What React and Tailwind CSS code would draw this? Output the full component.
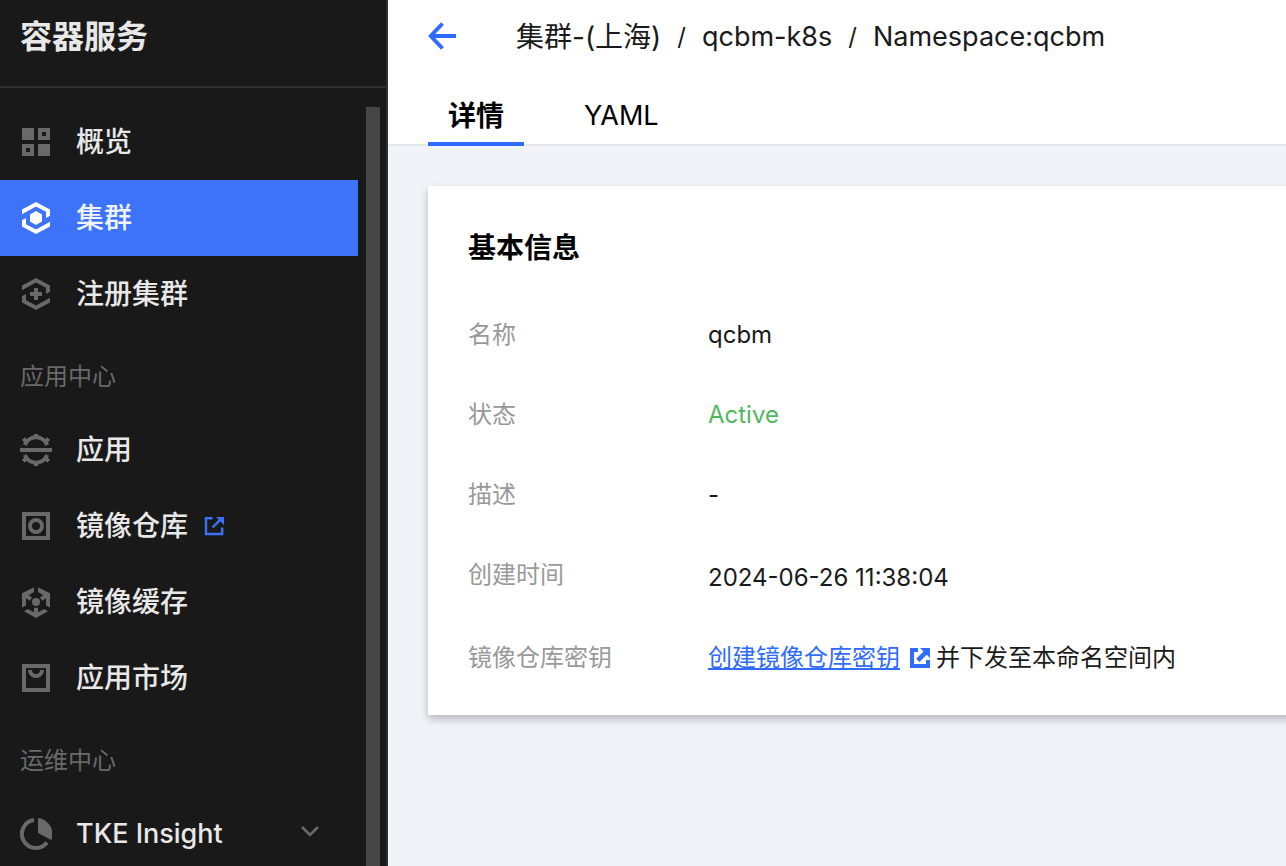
const HEX_TOP = 'M2 7.5 16 0l14 7.5v6.3L26 16V9.8L16 4.4 2 12.3z'
const HEX_BOTTOM = 'M30 24.5 16 32 2 24.5v-6.3L6 16v6.2l10 5.4 14-7.9z'

const icons = {
  overview: (
    <path
      fill="currentColor"
      fillRule="evenodd"
      d="M2 2h12v12H2zM18 2h12v12H18zM22 6v4h4V6zM2 18h12v12H2zM6 22v4h4v-4zM18 18h12v12H18z"
    />
  ),
  cluster: (
    <g fill="currentColor">
      <path d={HEX_TOP} />
      <path d={HEX_BOTTOM} />
      <path d="M10 12.5 16 9l6 3.5v7L16 23l-6-3.5z" />
    </g>
  ),
  register: (
    <g fill="currentColor">
      <path d={HEX_TOP} />
      <path d={HEX_BOTTOM} />
      <path d="M14 10h4v4h4v4h-4v4h-4v-4h-4v-4h4z" />
    </g>
  ),
  app: (
    <g fill="none" stroke="currentColor" strokeWidth="4">
      <path d="M0 16h32M16 0v4M16 28v4M3.3 4.6l4.4 4.4M28.7 4.6l-4.4 4.4M3.3 27.4l4.4-4.4M28.7 27.4l-4.4-4.4" />
      <path d="M4.8 11a12 12 0 0 1 22.4 0M4.8 21a12 12 0 0 0 22.4 0" />
    </g>
  ),
  registry: (
    <g fill="none" stroke="currentColor" strokeWidth="4">
      <rect x="4" y="4" width="24" height="24" />
      <circle cx="16" cy="16" r="6" />
    </g>
  ),
  cache: (
    <g fill="currentColor">
      <path d="M14 1.3 2 7.3v14.4l4-2.4v-7l4 2.4 2-3.4-3.4-2L14 6z" />
      <path d="M18 1.3l12 6v14.4l-4-2.4v-7l-4 2.4-2-3.4 3.4-2L18 6z" />
      <path d="M4 25.3 16 32l12-6.7-4-2.3-6 3.3v-4.6h-4v4.6L8 23z" />
      <circle cx="16" cy="16" r="4" />
    </g>
  ),
  market: (
    <g fill="none" stroke="currentColor" strokeWidth="4">
      <rect x="4" y="4" width="24" height="24" />
      <path d="M10 8a6 6 0 0 0 12 0" />
    </g>
  ),
  insight: (
    <g>
      <path fill="none" stroke="currentColor" strokeWidth="4" d="M14 2.1a14 14 0 1 0 13 22.4" />
      <path fill="currentColor" d="M18 0a16 16 0 0 1 13.2 22L18 15z" />
    </g>
  ),
}

function Icon({ name }) {
  return (
    <svg viewBox="0 0 32 32" className="size-8 shrink-0" aria-hidden="true">
      {icons[name]}
    </svg>
  )
}

function ExternalOutline() {
  return (
    <svg viewBox="0 0 20 20" className="size-5 text-[#3a72f5]" aria-hidden="true">
      <path fill="none" stroke="currentColor" strokeWidth="2.4" d="M8.5 2.2H2v15.8h16.2v-6.4M8.6 11.4l7.6-7.6" />
      <path fill="currentColor" d="M12 1h8v8z" />
    </svg>
  )
}

function ExternalSolid() {
  return (
    <svg viewBox="0 0 20 20" className="size-5 text-[#2f6bff]" aria-hidden="true">
      <path fill="none" stroke="currentColor" strokeWidth="4" d="M8 2H2v16h16v-6" />
      <path fill="none" stroke="currentColor" strokeWidth="4.6" d="M7.8 12.4l8-8" />
      <path fill="currentColor" d="M10 0h10v10z" />
    </svg>
  )
}

function NavItem({ icon, label, active, external, expandable }) {
  const tone = active ? 'bg-[#3d73f8] text-white' : 'text-[#696969]'
  return (
    <li>
      <a href="#" aria-current={active ? 'page' : undefined} className={`flex h-[76px] items-center pl-5 pr-[39px] ${tone}`}>
        <Icon name={icon} />
        <span
          className={`ml-6 font-medium leading-10 ${expandable ? 'text-[27px]' : 'text-[28px]'} ${active ? 'text-[#eef3ff]' : 'text-[#e8e8e8]'}`}
        >
          {label}
        </span>
        {external && (
          <span className="ml-4">
            <ExternalOutline />
          </span>
        )}
        {expandable && (
          <svg viewBox="0 0 18 12" className="mb-1 ml-auto h-3 w-[18px]" aria-hidden="true">
            <path fill="none" stroke="currentColor" strokeWidth="2.6" d="M1 1l8 8 8-8" />
          </svg>
        )}
      </a>
    </li>
  )
}

function NavSection({ children }) {
  return <li className="flex h-20 items-center pl-5 pt-2.5 text-2xl text-[#696969]">{children}</li>
}

function Sidebar() {
  return (
    <aside className="flex w-[388px] shrink-0 flex-col border-r-2 border-[#2e2e2e] bg-[#191919]">
      <header className="flex h-[88px] shrink-0 items-center border-b-2 border-[#2e2e2e] pb-3 pl-5">
        <h2 className="text-[32px] font-bold leading-10 text-[#e8e8e8]">容器服务</h2>
      </header>
      <div className="flex min-h-0 flex-1 gap-2 pr-1.5">
        <nav className="min-w-0 flex-1 overflow-hidden pt-4">
          <ul>
            <NavItem icon="overview" label="概览" />
            <NavItem icon="cluster" label="集群" active />
            <NavItem icon="register" label="注册集群" />
            <NavSection>应用中心</NavSection>
            <NavItem icon="app" label="应用" />
            <NavItem icon="registry" label="镜像仓库" external />
            <NavItem icon="cache" label="镜像缓存" />
            <NavItem icon="market" label="应用市场" />
            <NavSection>运维中心</NavSection>
            <NavItem icon="insight" label="TKE Insight" expandable />
          </ul>
        </nav>
        <div className="mt-[19px] w-3.5 bg-[#464646]" />
      </div>
    </aside>
  )
}

function Row({ label, tall, children }) {
  return (
    <div className={`flex ${tall ? 'h-[43px]' : 'h-10'}`}>
      <dt className="w-60 shrink-0 leading-10 text-[#999]">{label}</dt>
      <dd className={`flex h-10 items-center leading-10 ${tall ? 'self-end' : ''}`}>{children}</dd>
    </div>
  )
}

export default function App() {
  return (
    <div className="flex h-screen overflow-hidden bg-[#f2f3f8] font-['Inter','Noto_Sans_CJK_SC',sans-serif] text-[#1a1a1a]">
      <Sidebar />
      <main className="min-w-0 flex-1">
        <header className="flex h-[146px] flex-col justify-between border-b-2 border-[#e7e8ed] bg-white pl-10">
          <div className="flex h-[72px] items-center">
            <button type="button" aria-label="返回" className="mr-[60px]">
              <svg viewBox="0 0 28 28" className="size-7 text-[#2f6bff]" aria-hidden="true">
                <path fill="none" stroke="currentColor" strokeWidth="3.8" d="M14.5 1.6 2.7 14l11.8 12.4M3 14h25" />
              </svg>
            </button>
            <nav className="flex items-center gap-4 pt-0.5 text-[27px] leading-10">
              <a href="#" className="text-[28px]">集群-(上海)</a>
              <span className="text-2xl">/</span>
              <a href="#">qcbm-k8s</a>
              <span className="text-2xl">/</span>
              <span>Namespace:qcbm</span>
            </nav>
          </div>
          <div role="tablist" className="-mb-0.5 flex gap-10 text-[27px] leading-10 text-black">
            <button type="button" role="tab" aria-selected="true" className="h-[52px] border-b-4 border-[#2f6bff] px-5 pb-1 text-[28px] font-bold">
              详情
            </button>
            <button type="button" role="tab" aria-selected="false" className="h-[52px] border-b-4 border-transparent px-5 pb-1">
              YAML
            </button>
          </div>
        </header>
        <div className="pl-10 pt-10">
          <section className="-mr-4 bg-white pb-[37px] pl-10 pt-[42px] shadow-[0_4px_8px_rgba(54,58,80,0.32)]">
            <h3 className="mb-[47px] text-[28px] font-bold leading-10 text-black">基本信息</h3>
            <dl className="flex flex-col gap-10 text-2xl">
              <Row label="名称">qcbm</Row>
              <Row label="状态">
                <span className="text-[#4fb85c]">Active</span>
              </Row>
              <Row label="描述">-</Row>
              <Row label="创建时间" tall>
                <time dateTime="2024-06-26T11:38:04">2024-06-26 11:38:04</time>
              </Row>
              <Row label="镜像仓库密钥">
                <a href="#" className="flex items-center gap-2.5 text-[#2f6bff]">
                  <span className="underline decoration-2 underline-offset-2">创建镜像仓库密钥</span>
                  <ExternalSolid />
                </a>
                <span className="ml-1.5">并下发至本命名空间内</span>
              </Row>
            </dl>
          </section>
        </div>
      </main>
    </div>
  )
}
